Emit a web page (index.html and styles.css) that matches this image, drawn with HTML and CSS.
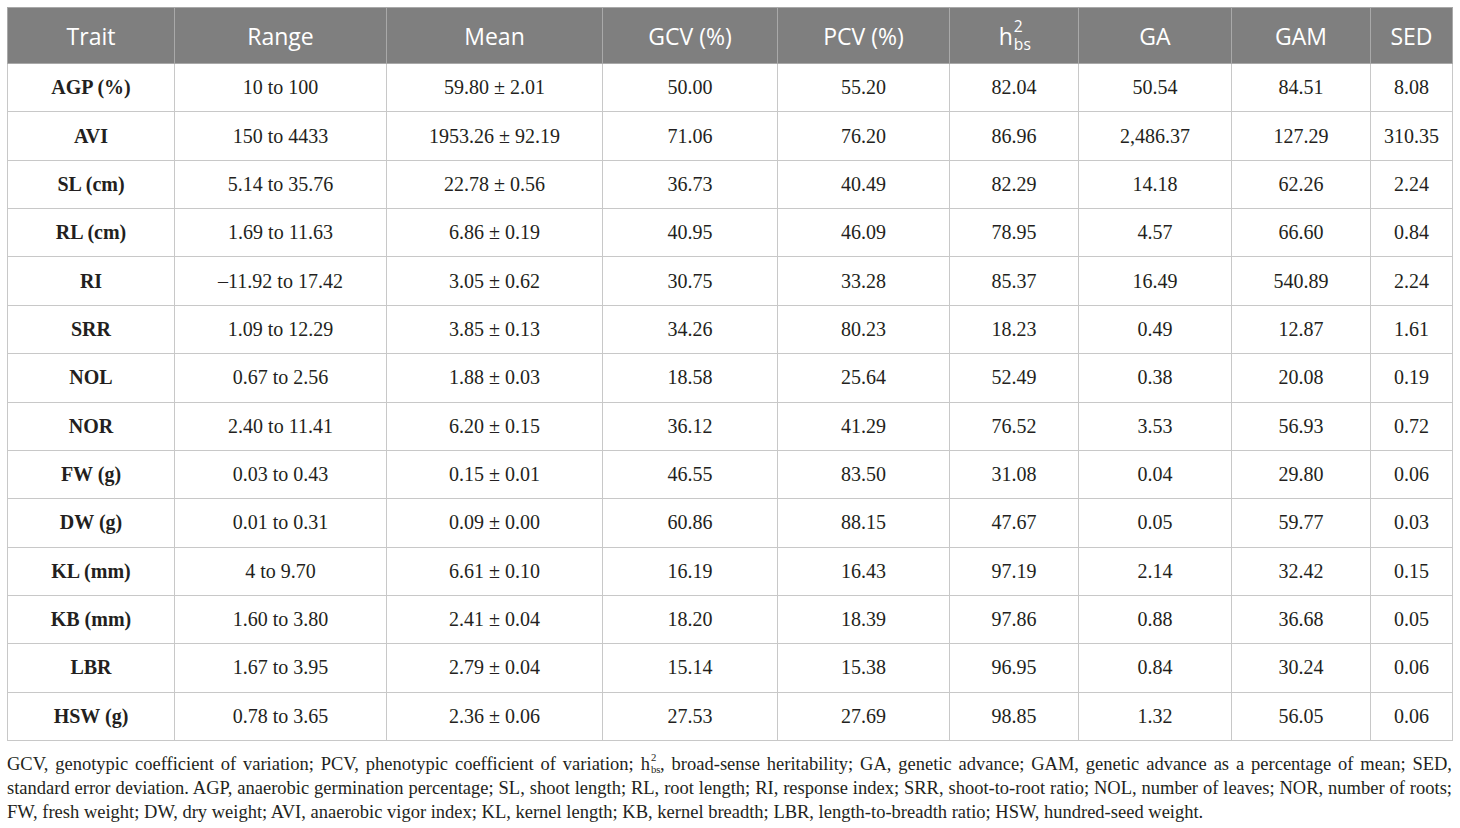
FILE: index.html
```html
<!DOCTYPE html>
<html>
<head>
<meta charset="utf-8">
<title>Trait variability</title>
<link rel="stylesheet" href="styles.css">
</head>
<body>
<div class="page">
<table class="traits">
	<colgroup>
		<col style="width:167px"><col style="width:212px"><col style="width:216px"><col style="width:175px"><col style="width:172px"><col style="width:129px"><col style="width:153px"><col style="width:139px"><col style="width:82px">
	</colgroup>
	<thead>
		<tr>
			<th>Trait</th>
			<th>Range</th>
			<th>Mean</th>
			<th>GCV (%)</th>
			<th>PCV (%)</th>
			<th>h<span class="idx"><span class="up">2</span><span class="dn">bs</span></span></th>
			<th>GA</th>
			<th>GAM</th>
			<th>SED</th>
		</tr>
	</thead>
	<tbody>
		<tr><td class="name">AGP (%)</td><td>10 to 100</td><td>59.80 ± 2.01</td><td>50.00</td><td>55.20</td><td>82.04</td><td>50.54</td><td>84.51</td><td>8.08</td></tr>
		<tr><td class="name">AVI</td><td>150 to 4433</td><td>1953.26 ± 92.19</td><td>71.06</td><td>76.20</td><td>86.96</td><td>2,486.37</td><td>127.29</td><td>310.35</td></tr>
		<tr><td class="name">SL (cm)</td><td>5.14 to 35.76</td><td>22.78 ± 0.56</td><td>36.73</td><td>40.49</td><td>82.29</td><td>14.18</td><td>62.26</td><td>2.24</td></tr>
		<tr><td class="name">RL (cm)</td><td>1.69 to 11.63</td><td>6.86 ± 0.19</td><td>40.95</td><td>46.09</td><td>78.95</td><td>4.57</td><td>66.60</td><td>0.84</td></tr>
		<tr><td class="name">RI</td><td>–11.92 to 17.42</td><td>3.05 ± 0.62</td><td>30.75</td><td>33.28</td><td>85.37</td><td>16.49</td><td>540.89</td><td>2.24</td></tr>
		<tr><td class="name">SRR</td><td>1.09 to 12.29</td><td>3.85 ± 0.13</td><td>34.26</td><td>80.23</td><td>18.23</td><td>0.49</td><td>12.87</td><td>1.61</td></tr>
		<tr><td class="name">NOL</td><td>0.67 to 2.56</td><td>1.88 ± 0.03</td><td>18.58</td><td>25.64</td><td>52.49</td><td>0.38</td><td>20.08</td><td>0.19</td></tr>
		<tr><td class="name">NOR</td><td>2.40 to 11.41</td><td>6.20 ± 0.15</td><td>36.12</td><td>41.29</td><td>76.52</td><td>3.53</td><td>56.93</td><td>0.72</td></tr>
		<tr><td class="name">FW (g)</td><td>0.03 to 0.43</td><td>0.15 ± 0.01</td><td>46.55</td><td>83.50</td><td>31.08</td><td>0.04</td><td>29.80</td><td>0.06</td></tr>
		<tr><td class="name">DW (g)</td><td>0.01 to 0.31</td><td>0.09 ± 0.00</td><td>60.86</td><td>88.15</td><td>47.67</td><td>0.05</td><td>59.77</td><td>0.03</td></tr>
		<tr><td class="name">KL (mm)</td><td>4 to 9.70</td><td>6.61 ± 0.10</td><td>16.19</td><td>16.43</td><td>97.19</td><td>2.14</td><td>32.42</td><td>0.15</td></tr>
		<tr><td class="name">KB (mm)</td><td>1.60 to 3.80</td><td>2.41 ± 0.04</td><td>18.20</td><td>18.39</td><td>97.86</td><td>0.88</td><td>36.68</td><td>0.05</td></tr>
		<tr><td class="name">LBR</td><td>1.67 to 3.95</td><td>2.79 ± 0.04</td><td>15.14</td><td>15.38</td><td>96.95</td><td>0.84</td><td>30.24</td><td>0.06</td></tr>
		<tr><td class="name">HSW (g)</td><td>0.78 to 3.65</td><td>2.36 ± 0.06</td><td>27.53</td><td>27.69</td><td>98.85</td><td>1.32</td><td>56.05</td><td>0.06</td></tr>
	</tbody>
</table>
<p class="note">GCV, genotypic coefficient of variation; PCV, phenotypic coefficient of variation; h<span class="idx small"><span class="up">2</span><span class="dn">bs</span></span>, broad-sense heritability; GA, genetic advance; GAM, genetic advance as a percentage of mean; SED, standard error deviation. AGP, anaerobic germination percentage; SL, shoot length; RL, root length; RI, response index; SRR, shoot-to-root ratio; NOL, number of leaves; NOR, number of roots; FW, fresh weight; DW, dry weight; AVI, anaerobic vigor index; KL, kernel length; KB, kernel breadth; LBR, length-to-breadth ratio; HSW, hundred-seed weight.</p>
</div>
</body>
</html>
```

FILE: styles.css
```css
* {margin:0;padding:0;box-sizing:border-box;}

body {background:#fff;color:#222;font-family:"Liberation Serif","Times New Roman",serif;}

.page {padding:7px 8px 0 7px;}

.traits {border-collapse:collapse;table-layout:fixed;width:1445px;}
.traits th {background:#7f7f7f;color:#fff;font-family:"Open Sans","Noto Sans",sans-serif;font-weight:normal;font-size:23px;height:56px;border:1px solid #a9a9a9;text-align:center;vertical-align:middle;padding:0 4px;}
.traits td {font-size:20px;height:48.36px;border:1px solid #c8c8c8;text-align:center;vertical-align:middle;padding:0 4px;color:#231f20;}
.traits td.name {font-weight:bold;}

.idx {display:inline-block;position:relative;width:1.05em;height:1em;font-size:0.68em;vertical-align:baseline;}
.idx .up {position:absolute;left:1px;top:-0.62em;line-height:0.9;}
.idx .dn {position:absolute;left:1px;top:0.5em;line-height:0.9;}
.idx.small {width:0.95em;font-size:0.58em;}

.note {font-size:18.5px;line-height:24px;text-align:justify;margin-top:11px;color:#231f20;width:1445px;}
```
